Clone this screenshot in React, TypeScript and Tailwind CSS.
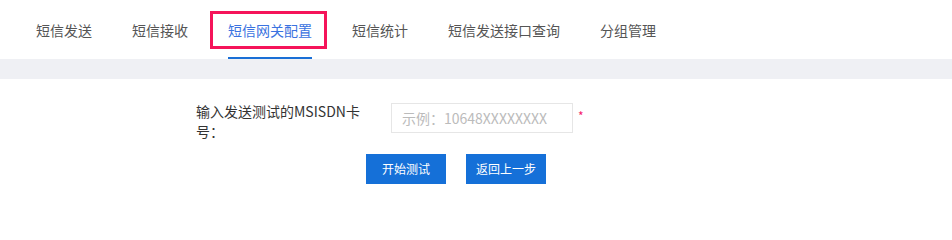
import { useState } from "react";

const tabs = [
  "短信发送",
  "短信接收",
  "短信网关配置",
  "短信统计",
  "短信发送接口查询",
  "分组管理",
];

export default function App() {
  const [active, setActive] = useState(2);
  const [msisdn, setMsisdn] = useState("");

  return (
    <div className="h-[238px] w-[952px] bg-white font-['Microsoft_YaHei','Noto_Sans_CJK_SC',sans-serif] text-[14px]">
      {/* 顶部标签 */}
      <div className="flex h-[59px] gap-[40px] pl-[36px]">
        {tabs.map((tab, i) => (
          <div
            key={tab}
            onClick={() => setActive(i)}
            className={
              i === active
                ? "relative flex h-full cursor-pointer items-center border-b-2 border-[#1a6fd6] pt-[3px] text-[#3a72e0]"
                : "relative flex h-full cursor-pointer items-center border-b-2 border-transparent pt-[3px] text-[#555]"
            }
          >
            {tab}
            {i === active && (
              <span className="pointer-events-none absolute top-[11px] left-[-18px] h-[38px] w-[117px] border-[3px] border-[#f5145a]" />
            )}
          </div>
        ))}
      </div>
      <div className="h-[20px] bg-[#eff0f4]" />

      {/* 测试表单 */}
      <div className="pt-[22px]">
        <div className="flex items-start pl-[196px]">
          <label
            htmlFor="msisdn"
            className="w-[170px] leading-[20px] text-[#333]"
          >
            输入发送测试的MSISDN卡号：
          </label>
          <input
            id="msisdn"
            value={msisdn}
            onChange={(e) => setMsisdn(e.target.value)}
            placeholder="示例：10648XXXXXXXX"
            className="mt-[2px] ml-[25px] h-[30px] w-[182px] border border-[#e6e6e6] px-[10px] text-[14px] text-[#333] outline-none placeholder:text-[#bbb]"
          />
          <span className="mt-[6px] ml-[5px] text-[12px] text-[#f5226c]">*</span>
        </div>
        <div className="mt-[13px] flex gap-[20px] pl-[366px]">
          <button className="h-[30px] w-[80px] bg-[#1570d8] text-[12px] text-white">
            开始测试
          </button>
          <button className="h-[30px] w-[80px] bg-[#1570d8] text-[12px] text-white">
            返回上一步
          </button>
        </div>
      </div>
    </div>
  );
}
